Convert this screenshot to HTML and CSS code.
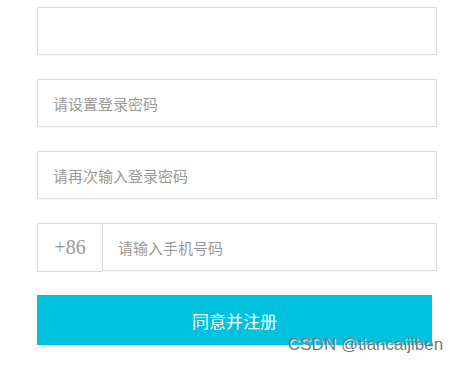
FILE: index.html
```html
<!DOCTYPE html>
<html lang="zh-CN">
<head>
	<meta charset="UTF-8">
	<title>注册</title>
	<link rel="stylesheet" href="styles.css">
</head>
<body>
	<form class="reg">
		<div class="row"><input type="text" class="txt"></div>
		<div class="row"><input type="password" class="txt" placeholder="请设置登录密码"></div>
		<div class="row"><input type="password" class="txt" placeholder="请再次输入登录密码"></div>
		<div class="row phone">
			<span class="code">+86</span>
			<input type="text" class="txt" placeholder="请输入手机号码">
		</div>
		<button type="button" class="btn">同意并注册</button>
	</form>
	<span class="mark">CSDN @tiancaijiben</span>
</body>
</html>
```

FILE: styles.css
```css
body, form, div, input, button {
	margin: 0;
	padding: 0;
}

body {
	font-family: "Microsoft YaHei", "Noto Sans CJK SC", sans-serif;
	background: #fff;
}

.reg {
	width: 400px;
	padding: 7px 0 0 37px;
}

.row {
	margin-bottom: 24px;
}

.txt {
	display: block;
	box-sizing: border-box;
	width: 400px;
	height: 48px;
	border: 1px solid #dcdcdc;
	padding: 0 15px;
	font-size: 15px;
	font-family: inherit;
	color: #333;
	outline: none;
}

.txt::placeholder {
	color: #999;
}

.phone {
	display: flex;
	align-items: flex-start;
}

.phone .code {
	box-sizing: border-box;
	width: 65px;
	height: 49px;
	border: 1px solid #dcdcdc;
	border-right: none;
	text-align: center;
	line-height: 46px;
	font-family: "Liberation Serif", serif;
	font-size: 20px;
	color: #999;
}

.phone .txt {
	flex: 1;
	width: auto;
}

.btn {
	display: block;
	width: 395px;
	height: 50px;
	border: none;
	background: #00c1de;
	color: #fff;
	font-size: 17px;
	font-family: inherit;
	margin-top: -1px;
}

.mark {
	position: absolute;
	left: 288px;
	top: 335px;
	font-family: "Liberation Sans", Arial, sans-serif;
	font-size: 17px;
	color: #7a7a7a;
	text-shadow: 1px 1px 1px #fff;
}
```
